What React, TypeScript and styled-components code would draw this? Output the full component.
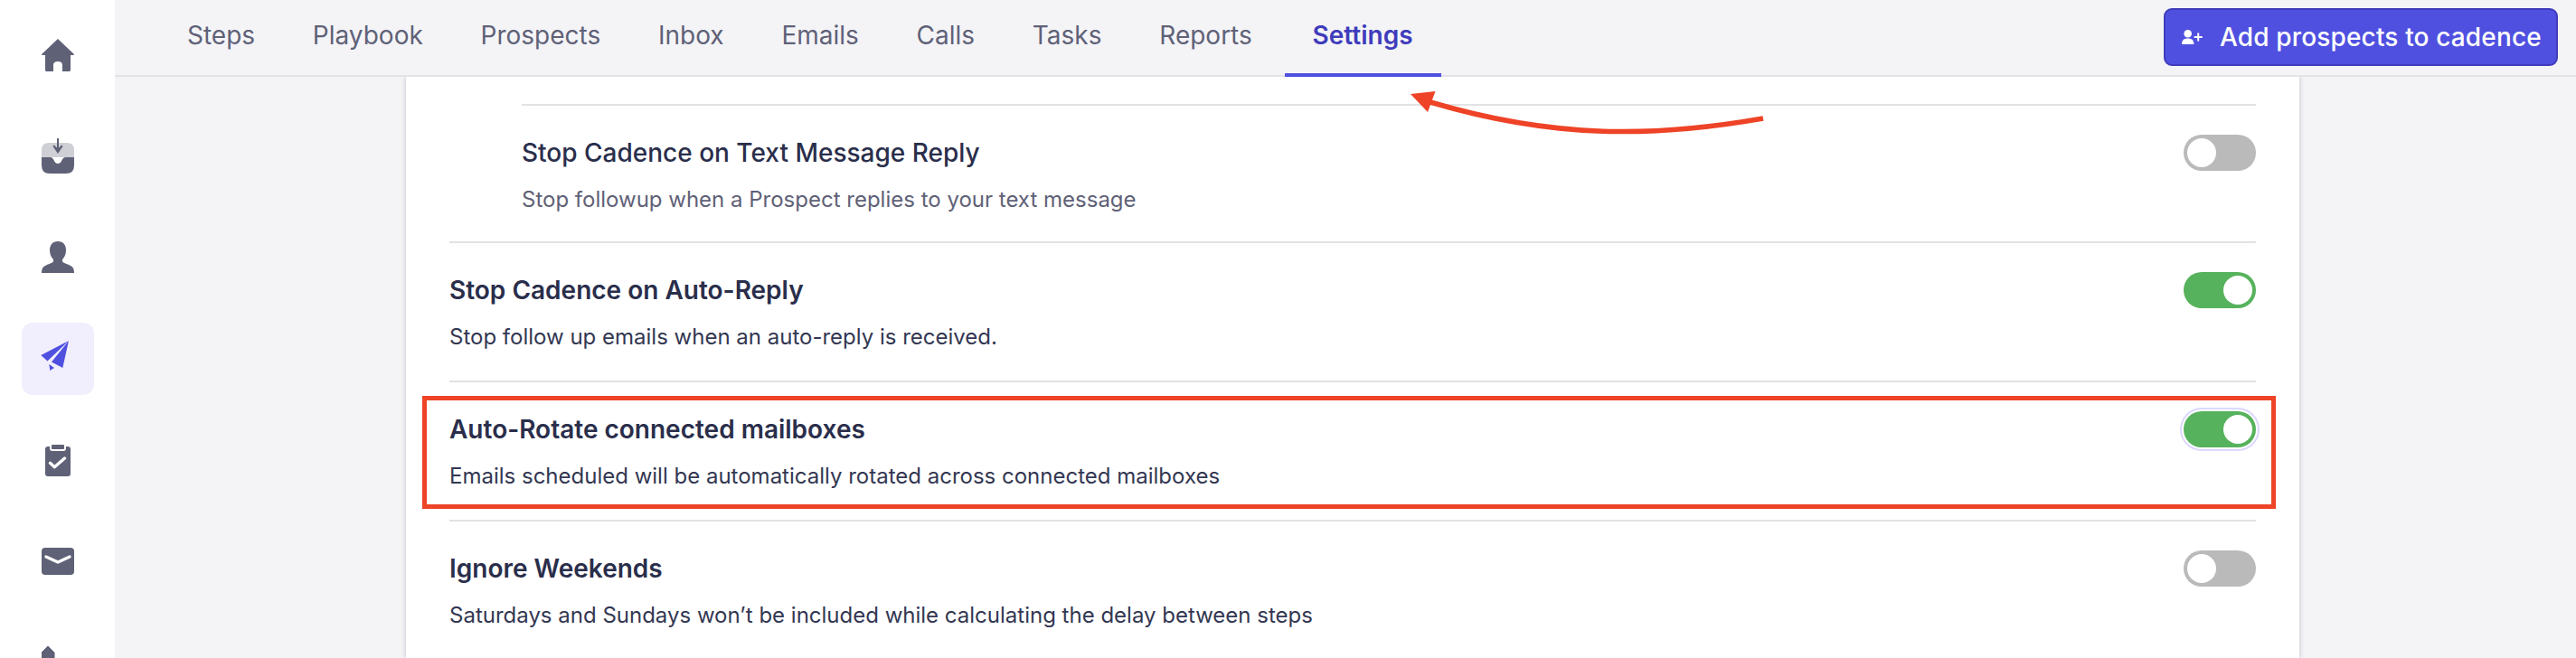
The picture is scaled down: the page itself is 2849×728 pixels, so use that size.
import React from "react";
import styled, { createGlobalStyle } from "styled-components";

const Global = createGlobalStyle`
  html, body { margin: 0; padding: 0; height: 100%; background: #f4f4f7; overflow: hidden; }
  body { font-family: Inter, "Liberation Sans", sans-serif; }
  * { box-sizing: border-box; }
`;

const Shell = styled.div`
  position: relative;
  display: flex;
  width: 2849px;
  height: 728px;
  overflow: hidden;
`;

const Sidebar = styled.nav`
  flex: 0 0 127px;
  display: flex;
  flex-direction: column;
  align-items: center;
  gap: 32px;
  padding-top: 21px;
  background: #fff;
  overflow: hidden;
`;

const SideItem = styled.div<{ $active?: boolean }>`
  flex: 0 0 80px;
  width: 80px;
  display: flex;
  align-items: center;
  justify-content: center;
  border-radius: 12px;
  background: ${(p) => (p.$active ? "#f1effd" : "transparent")};
  color: ${(p) => (p.$active ? "#5050e0" : "#5f6177")};
`;

const Main = styled.div`
  flex: 1;
  display: flex;
  flex-direction: column;
  min-width: 0;
`;

const Header = styled.header`
  flex: 0 0 85px;
  height: 85px;
  min-height: 0;
  display: flex;
  align-items: flex-start;
  justify-content: space-between;
  padding: 0 20px 0 52px;
  border-bottom: 2px solid #e3e3e7;
  background: #f4f4f7;
`;

const Tabs = styled.div`
  display: flex;
  align-items: flex-start;
  gap: 7.75px;
`;

const Tab = styled.div<{ $active?: boolean }>`
  display: flex;
  align-items: center;
  height: 85px;
  padding: 0 ${(p) => (p.$active ? "31px 3px 31px" : "28px 3px")};
  font-size: 28px;
  font-weight: ${(p) => (p.$active ? 600 : 400)};
  color: ${(p) => (p.$active ? "#3f3cbb" : "#5f6177")};
  border-bottom: 4px solid ${(p) => (p.$active ? "#5050e0" : "transparent")};
`;

const AddButton = styled.button`
  margin-top: 9px;
  height: 64px;
  width: 436px;
  display: flex;
  align-items: center;
  gap: 18px;
  padding: 0 0 0 18px;
  border: 2px solid #3f3cbb;
  border-radius: 9px;
  background: #5050e0;
  color: #fff;
  font-family: inherit;
  font-size: 28px;
  font-weight: 500;
  letter-spacing: 0.15px;
`;

const Content = styled.div`
  flex: 1;
  min-height: 0;
  padding-left: 322px;
  overflow: hidden;
`;

const Card = styled.section`
  width: 2094px;
  height: 100%;
  padding: 30px 48px 0;
  background: #fff;
  box-shadow: 0 0 5px rgba(40, 40, 70, 0.28);
`;

const Row = styled.div<{ $nested?: boolean }>`
  display: flex;
  justify-content: space-between;
  align-items: flex-start;
  margin-left: ${(p) => (p.$nested ? "80px" : "0")};
  padding: ${(p) => (p.$nested ? "32px 0 28px" : "32px 0 30px")};
  border-top: 2px solid #e2e2e4;
`;

const RowText = styled.div`
  display: flex;
  flex-direction: column;
  gap: 14px;
`;

const Title = styled.div<{ $nested?: boolean }>`
  font-size: 28px;
  line-height: 40px;
  font-weight: ${(p) => (p.$nested ? 500 : 600)};
  color: #2a2e4b;
`;

const Desc = styled.div<{ $muted?: boolean }>`
  font-size: 24px;
  line-height: 36px;
  color: ${(p) => (p.$muted ? "#5f6177" : "#333752")};
`;

const Toggle = styled.div<{ $on?: boolean; $focus?: boolean }>`
  flex: 0 0 80px;
  height: 40px;
  display: flex;
  justify-content: ${(p) => (p.$on ? "flex-end" : "flex-start")};
  padding: 4px;
  border-radius: 20px;
  background: ${(p) => (p.$on ? "#56b25c" : "#bababb")};
  box-shadow: ${(p) => (p.$focus ? "0 0 0 2px #fff, 0 0 0 4px #dcd8fd" : "none")};
`;

const Knob = styled.span`
  width: 32px;
  height: 32px;
  border-radius: 50%;
  background: #fff;
`;

const Highlight = styled.div`
  position: absolute;
  left: 467px;
  top: 438px;
  width: 2050px;
  height: 125px;
  border: 5px solid #ee4327;
  pointer-events: none;
`;

const Arrow = styled.svg`
  position: absolute;
  left: 1550px;
  top: 95px;
  width: 410px;
  height: 60px;
  pointer-events: none;
`;

const Home = () => (
  <svg width="36" height="36" viewBox="0 0 36 36" fill="currentColor">
    <path d="M18 0 L35.4 16.6 Q36.6 18 35 18 L32 18 L32 34.5 Q32 36 30.5 36 L23 36 L23 29 Q23 25 18 25 Q13 25 13 29 L13 36 L5.5 36 Q4 36 4 34.5 L4 18 L1 18 Q-.6 18 .6 16.6 Z" />
  </svg>
);

const Inbox = () => (
  <svg width="36" height="40" viewBox="0 0 36 40" fill="currentColor">
    <path d="M8 5 H28 Q36 5 36 13 V21 H0 V13 Q0 5 8 5 Z" opacity=".3" />
    <path d="M0 21 H10 Q12 21 13.5 24 Q15 28 18 28 Q21 28 22.5 24 Q24 21 26 21 H36 V30 Q36 39 27 39 H9 Q0 39 0 30 Z" />
    <path d="M17 0 H19 V10.5 L22.2 7.4 L23.6 8.8 L18 17 L12.4 8.8 L13.8 7.4 L17 10.5 Z" />
  </svg>
);

const Person = () => (
  <svg width="36" height="36" viewBox="0 0 36 36" fill="currentColor">
    <path d="M18 0 C24 0 27 4 27 10 C27 14.5 25 18 23 20 V22 C23 24 29 25 33 27.5 C35.5 29 36 32 36 35 H0 C0 32 .5 29 3 27.5 C7 25 13 24 13 22 V20 C11 18 9 14.5 9 10 C9 4 12 0 18 0 Z" />
  </svg>
);

const Plane = () => (
  <svg width="32" height="34" viewBox="0 0 32 34" fill="currentColor" style={{ marginLeft: -6, marginTop: -8 }}>
    <path d="M31 1 L0.3 17 L7.5 23.5 Z" />
    <path d="M31 1 L12 24.5 L24.3 31 Z" />
    <path d="M9.3 27 L15 31 L10.3 34 Z" />
  </svg>
);

const Clipboard = () => (
  <svg width="28" height="36" viewBox="0 0 28 36" fill="currentColor">
    <path d="M3 3 H25 Q28 3 28 6 V33 Q28 36 25 36 H3 Q0 36 0 33 V6 Q0 3 3 3 Z" />
    <rect x="6" y="0" width="16" height="7" rx="2" fill="currentColor" stroke="#fff" strokeWidth="2" />
    <path d="M5.5 21.3 L10.3 25.7 L21.5 16" fill="none" stroke="#fff" strokeWidth="3.4" strokeLinecap="round" strokeLinejoin="round" />
  </svg>
);

const Mail = () => (
  <svg width="36" height="30" viewBox="0 0 36 30" fill="currentColor">
    <rect width="36" height="30" rx="4" />
    <path d="M5 10 L18 16 L31 10" fill="none" stroke="#fff" strokeWidth="3.4" strokeLinecap="round" strokeLinejoin="round" />
  </svg>
);

const Chart = () => (
  <svg width="36" height="36" viewBox="0 0 36 36" fill="currentColor">
    <path d="M7 0 L14 7 V36 H0 V7 Z" stroke="currentColor" strokeWidth="1" strokeLinejoin="round" />
  </svg>
);

const UserPlus = () => (
  <svg width="24" height="18" viewBox="0 0 24 18" fill="#fff" style={{ flex: "0 0 24px" }}>
    <circle cx="6.7" cy="5.3" r="4.3" />
    <path d="M0 17 C0 12.5 2.5 10.5 6.7 10.5 C11 10.5 13.4 12.5 13.4 17 Z" />
    <path d="M17.2 4.5 H19.2 V8 H22.7 V10 H19.2 V13.5 H17.2 V10 H13.7 V8 H17.2 Z" />
  </svg>
);

const tabs = ["Steps", "Playbook", "Prospects", "Inbox", "Emails", "Calls", "Tasks", "Reports"];

const rows = [
  { title: "Stop Cadence on Text Message Reply", desc: "Stop followup when a Prospect replies to your text message", nested: true, on: false },
  { title: "Stop Cadence on Auto-Reply", desc: "Stop follow up emails when an auto-reply is received.", on: true },
  { title: "Auto-Rotate connected mailboxes", desc: "Emails scheduled will be automatically rotated across connected mailboxes", on: true, focus: true },
  { title: "Ignore Weekends", desc: "Saturdays and Sundays won’t be included while calculating the delay between steps", on: false },
];

export default function App() {
  return (
    <Shell>
      <Global />
      <Sidebar>
        <SideItem><Home /></SideItem>
        <SideItem><Inbox /></SideItem>
        <SideItem><Person /></SideItem>
        <SideItem $active><Plane /></SideItem>
        <SideItem><Clipboard /></SideItem>
        <SideItem><Mail /></SideItem>
        <SideItem><Chart /></SideItem>
      </Sidebar>
      <Main>
        <Header>
          <Tabs>
            {tabs.map((t) => (
              <Tab key={t}>{t}</Tab>
            ))}
            <Tab $active>Settings</Tab>
          </Tabs>
          <AddButton>
            <UserPlus />
            Add prospects to cadence
          </AddButton>
        </Header>
        <Content>
          <Card>
            {rows.map((r) => (
              <Row key={r.title} $nested={r.nested}>
                <RowText>
                  <Title $nested={r.nested}>{r.title}</Title>
                  <Desc $muted={r.nested}>{r.desc}</Desc>
                </RowText>
                <Toggle $on={r.on} $focus={r.focus}>
                  <Knob />
                </Toggle>
              </Row>
            ))}
          </Card>
        </Content>
      </Main>
      <Highlight />
      <Arrow viewBox="1550 95 410 60">
        <path d="M1950 131 C1830 152 1720 154 1582 113" fill="none" stroke="#ee4327" strokeWidth="5.5" />
        <path d="M1560 104 L1587.5 101 L1579 124 Z" fill="#ee4327" />
      </Arrow>
    </Shell>
  );
}
